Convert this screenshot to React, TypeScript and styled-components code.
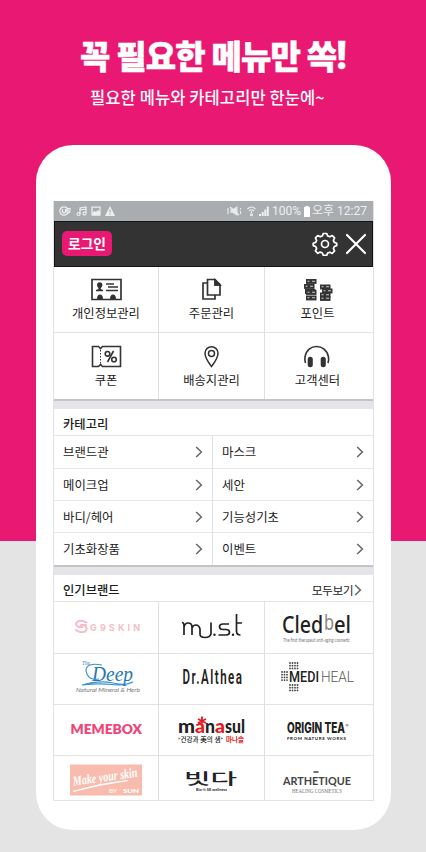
import React from 'react';
import styled, { createGlobalStyle } from 'styled-components';

const Global = createGlobalStyle`
  * { box-sizing: border-box; }
  body { margin: 0; font-family: "Noto Sans CJK KR", "Noto Sans", sans-serif; color: #1c1c1c; }
  svg { display: block; }
`;

const Page = styled.main`
  width: 426px; height: 852px; overflow: hidden;
  background: linear-gradient(#e81873 0 541px, #e4e4e4 541px);
  display: flex; flex-direction: column;
`;
const Hero = styled.header`
  height: 145px; flex: none; color: #fff; white-space: nowrap;
`;
const Headline = styled.h1`
  margin: 34px 0 0 80px; height: 42px; line-height: 42px;
  font-size: 33px; font-weight: 900; letter-spacing: -0.85px;
  -webkit-text-stroke: 0.5px #fff;
`;
const Bang = styled.span`
  font-family: Roboto, sans-serif; font-size: 38px; line-height: 30px;
`;
const Tagline = styled.p`
  margin: 9px 0 0 90px; height: 24px; line-height: 24px;
  font-size: 16.5px; font-weight: 500; letter-spacing: 0.1px;
`;
const Phone = styled.section`
  width: 355px; height: 685px; margin-left: 36px; flex: none;
  border-radius: 37px; background: #fff; padding: 56px 17px 0;
`;
const Screen = styled.div`
  width: 321px; height: 600px; border: 1px solid #e2e2e6; border-top: 0;
  display: flex; flex-direction: column; overflow: hidden;
`;
const StatusBar = styled.div`
  height: 20px; flex: none; background: #a9adb0; color: #eef0f0;
  display: flex; align-items: center; justify-content: space-between;
  padding: 0 6px 0 5px; font: 12px/20px Roboto, "Noto Sans CJK KR", sans-serif;
`;
const StatusText = styled.div`
  display: flex; align-items: center; gap: 1.5px; white-space: nowrap; letter-spacing: 0;
`;
const AppBar = styled.div`
  height: 46px; flex: none; background: #333; border: 1px solid #141414;
  display: flex; align-items: center; gap: 7px; padding: 0 5px 0 7px;
`;
const Login = styled.button`
  width: 50px; height: 25px; border: 0; border-radius: 5px; padding: 0 0 1px; margin-bottom: 1px;
  background: #e81873; color: #fff; margin-right: auto;
  font: 700 13.8px/23px "Noto Sans CJK KR", sans-serif; white-space: nowrap;
`;
const Shortcuts = styled.div`
  display: grid; grid-template-columns: 105px 106px 108px; grid-template-rows: 66px 66px; flex: none;
`;
const Shortcut = styled.div`
  border-right: 1px solid #dfe0e4; border-bottom: 1px solid #e2e2e6;
  &:nth-child(3n) { border-right: 0; padding-right: 3px; }
  &:nth-child(n+4) { border-bottom: 0; padding-top: 12px; }
  display: flex; flex-direction: column; align-items: center; padding-top: 11px;
  font-size: 12.3px; line-height: 18px; white-space: nowrap;
  svg { margin-bottom: 3px; }
`;
const Divider = styled.div`
  height: 10px; flex: none; background: #e4e4e9; border-top: 2px solid #c4c4c8;
`;
const Title = styled.h2`
  margin: 0; height: 27px; flex: none; border-bottom: 1px solid #e4e4e8;
  display: flex; justify-content: space-between; align-items: center; padding: 4px 11px 0 9px;
  font-size: 12.3px; font-weight: 500; line-height: 18px;
`;
const More = styled.span`
  display: flex; align-items: center; font-size: 11.8px; font-weight: 400; gap: 1px; letter-spacing: -0.55px;
`;
const Categories = styled.div`
  display: grid; grid-template-columns: 159px 160px; grid-template-rows: 33px 32px 32px 32px; flex: none;
`;
const Category = styled.div`
  display: flex; align-items: center; justify-content: space-between; padding: 0 9px;
  border-bottom: 1px solid #e6e6ea; border-right: 1px solid #dfe0e4;
  &:nth-child(2n) { border-right: 0; }
  &:nth-child(n+3) { padding-top: 1px; }
  &:nth-child(n+7) { border-bottom: 0; padding-top: 0; }
  font-size: 12.4px; white-space: nowrap;
`;
const Brands = styled.div`
  display: grid; grid-template-columns: 105px 106px 108px; grid-template-rows: 52px 51px 51px 45px; flex: none;
`;
const Brand = styled.div`
  border-right: 1px solid #dfe0e4; border-bottom: 1px solid #e2e2e6;
  &:nth-child(3n) { border-right: 0; }
  &:nth-child(n+10) { border-bottom: 0; }
  overflow: hidden;
`;

const Chevron = () => (
  <svg width="8" height="12" viewBox="0 0 8 12" fill="none" stroke="#666" strokeWidth="1.5"><path d="M1.2 1 6.4 6 1.2 11" /></svg>
);

const StatusLeft = () => (
  <svg width="58" height="12" viewBox="0 0 58 12" fill="none" stroke="#eef0f0" strokeWidth="1.2">
    <circle cx="5" cy="6" r="4.2" /><path d="M3.500 4v3q1.500 1.500 3 0V4M8 8.500q4-.5 3-5H8v4" />
    <path d="M21 9V3l6-1v6M21 5l6-1" /><circle cx="19.600" cy="9" r="1.500" /><circle cx="25.500" cy="8.600" r="1.500" />
    <path d="M33 2.200h8v8h-8z" /><path fill="#eef0f0" stroke="none" d="m33 9 2-3 2 1 2-2 2 2v3h-8z" />
    <path fill="#eef0f0" stroke="none" d="m51 1 5 10H46z" /><path stroke="#a9adb0" d="M51 4.500v3m0 1v1.200" />
  </svg>
);
const StatusSignals = () => (
  <svg width="44" height="12" viewBox="0 0 44 12" fill="none" stroke="#eef0f0" strokeWidth="1.1">
    <path d="M1 3v6M13.500 3v1.500m0 1.500v3M3 2l9 8" /><path fill="#eef0f0" d="M4 4.500h2L10 2v8L6 7.500H4z" opacity=".85" />
    <path d="M20.500 4q4-4 8 0M22 6q2.500-2.500 5 0M24.500 6v2" /><circle cx="24.500" cy="9.800" r="1" />
    <path fill="#eef0f0" stroke="none" d="M32 11V9h2v2zM34.700 11V7h2v4zM37.300 11V4.500h2V11zM39.800 11V1.500h2V11z" />
  </svg>
);
const Battery = () => (
  <svg width="8" height="11" viewBox="0 0 8 11" fill="#fff"><path d="M2.500 0h3v1H7v10H1V1h1.500z" /></svg>
);
const Gear = () => (
  <svg width="26" height="24" viewBox="-13 -12 26 24" fill="none" stroke="#fff" strokeWidth="1.700" strokeLinejoin="round">
    <path d="M-1.800-10.500h3.600l.8 2.400 2.200.9 2.500-1.200 2.300 2.300-1.200 2.400.9 2.100 2.400.8v2.400l-2.400.9-.9 2.200 1.200 2.300-2.500 2.400-2.300-1.200-2.200.9-.8 2.200h-3.600l-.8-2.300-2.200-.9-2.400 1.200-2.400-2.400 1.200-2.300-.9-2.100-2.500-.9V-.7l2.500-.9.900-2.100-1.200-2.400 2.400-2.300 2.400 1.200 2.200-.9z" />
    <circle r="3.500" />
  </svg>
);
const Close = () => (
  <svg width="22" height="22" viewBox="0 0 22 22" stroke="#fff" strokeWidth="2.200" strokeLinecap="round"><path d="m2 2 18 18M20 2 2 20" /></svg>
);

const IdCard = () => (
  <svg width="31" height="23" viewBox="0 0 31 23" fill="none" stroke="#333" strokeWidth="1.700">
    <path d="M1 1.500h29v20H1z" /><path d="M15 6h8M17 9h10M15 12.500h12" />
    <path fill="#333" stroke="none" d="M6 7a2.700 2.700 0 0 1 5.400 0q0 2-1.600 3v1l2.300 1v1.300H5V12l2.500-1v-1Q6 9 6 7zM6 21q0-4.500 3-4.500T12 21zM19 21q0-4.500 3-4.500T25 21z" />
  </svg>
);
const Copies = () => (
  <svg width="21" height="23" viewBox="0 0 21 23" fill="none" stroke="#333" strokeWidth="1.700">
    <path d="M6.500 1.500h7.500l5 5V17H6.500zM14 1.500V7h5M6 5H2v16h12v-3.500" /><path fill="#333" d="m14 2 5 5h-5z" />
  </svg>
);
const coinPositions = [[3, 1], [1, 6], [2, 11], [3, 12], [3, 17.500], [17, 6.500], [19, 10.500], [17, 14.500], [17, 18]];
const Coins = () => (
  <svg width="30" height="23" viewBox="0 0 30 23">
    {coinPositions.map(([x, y]) => (
      <g key={`${x}-${y}`}><rect x={x} y={y} width="10.500" height="4.900" fill="#333" /><path d={`M${x + 1.500} ${y + 2.200}h2M${x + 6} ${y + 2.200}h3`} stroke="#ccc" strokeWidth="1.100" /></g>
    ))}
  </svg>
);
const Coupon = () => (
  <svg width="31" height="23" viewBox="0 0 31 23" fill="none" stroke="#333" strokeWidth="1.600">
    <path d="M1.500 1.500h6l2 2 2-2h18v20h-18l-2-2-2 2h-6z" /><path d="M9.500 5v14" strokeDasharray="1.500 1.500" strokeWidth="1" />
    <circle cx="16.500" cy="8.800" r="2.300" /><circle cx="23" cy="14.500" r="2.300" /><path d="m22.500 6-6 11" />
  </svg>
);
const Pin = () => (
  <svg width="17" height="23" viewBox="0 0 17 23" fill="none" stroke="#333" strokeWidth="1.500">
    <path d="M8.500 21.500Q2 13 2 8.200a6.500 6.500 0 0 1 13 0q0 4.800-6.500 13.300z" /><circle cx="8.500" cy="8.500" r="3" />
  </svg>
);
const Headphones = () => (
  <svg width="29" height="23" viewBox="0 0 29 23" fill="none" stroke="#333" strokeWidth="1.600">
    <path d="M2.500 18q-1-3-.5-6C4-2 23-2 25.500 12q.500 3-.5 6" /><rect x="5.500" y="12.500" width="3.500" height="9" rx="1.700" fill="#333" /><rect x="18.500" y="12.500" width="3.500" height="9" rx="1.700" fill="#333" />
  </svg>
);

type MarkProps = {
  x: number; y: number; w: number; size: number; children: string;
  fill?: string; weight?: number; family?: string; style?: 'italic' | 'normal'; sx?: number; sy?: number; spaced?: boolean;
};
const Mark = ({ x, y, w, size, children, fill = '#222', weight = 400, family = 'Lato', style = 'normal', sx = 1, sy = 1, spaced = false }: MarkProps) => (
  <text transform={`translate(${x} ${y}) scale(${sx} ${sy})`} textLength={w / sx} lengthAdjust={spaced ? 'spacing' : 'spacingAndGlyphs'}
    fontFamily={`${family}, "Noto Sans CJK KR", sans-serif`} fontSize={size} fontWeight={weight} fontStyle={style} fill={fill}>{children}</text>
);
const Logo = ({ children }: { children: React.ReactNode }) => (
  <svg width="105" height="51" viewBox="0 0 105 51" fill="none">{children}</svg>
);

const dotBlocks = [[24, 9], [16, 18], [24, 31]];

const brands = [
  <Logo><path d="M32.500 20.500Q27 17.500 23 20q-2.500 3 1.500 5h4M32 23h-5M22 28q4 3.500 9 1.500 3.500-3 0-5.500" stroke="#f5bdc6" strokeWidth="2" strokeLinecap="round" />
    <Mark x={36} y={28.500} w={50} size={9} weight={700} fill="#f5bdc6" family="Inter" spaced>G9SKIN</Mark></Logo>,
  <Logo><path d="M23 20.500q2 0 2 3V33M25 25q1-4 4-4 4 0 4 4v8m0-7q1-3 4-3t4 4v5q0 3.500 5 3.500t6-3.500V20.500M70 22h-6q-3.500 0-3.500 2.700T64 27.500h3q3.500 0 3.500 2.700T67 33h-7.500M77.500 12v17q0 4 4 4M77.500 21h5.500" stroke="#222" strokeWidth="1.700" />
    <circle cx="55.500" cy="32.800" r="1.200" fill="#222" /><circle cx="74" cy="32.800" r="1.200" fill="#222" /></Logo>,
  <Logo><Mark x={17} y={31} w={41} size={24} family="Noto Sans" weight={500}>Cled</Mark><Mark x={59} y={27.500} w={10} size={21} fill="#8b8580" family="Noto Sans">b</Mark><Mark x={69} y={31} w={17} size={24} family="Noto Sans" weight={500}>el</Mark>
    <Mark x={18} y={40} w={67} size={5} fill="#777">The first therapeut anti-aging cosmetic</Mark></Logo>,
  <Logo><Mark x={28} y={11} w={8} size={5.500} family="Liberation Serif" style="italic" fill="#2676b5">The</Mark>
    <Mark x={38} y={26.500} w={41} size={21} family="Liberation Serif" style="italic" fill="#2676b5">Deep</Mark>
    <path d="M48 11q-16-3-16 6 2 10 13 8M28 31q18-5 31-2t20-1q-9 4-21 2.500t-30 .5" stroke="#3b93cf" strokeWidth="1.200" fill="none" />
    <Mark x={22} y={37.500} w={64} size={6.500} style="italic" fill="#777">Natural Mineral &amp; Herb</Mark></Logo>,
  <Logo><Mark x={23.500} y={30} w={59.500} size={16.500} family="Roboto" weight={600} sx={0.7} sy={1.180} spaced>Dr.Althea</Mark></Logo>,
  <Logo>{dotBlocks.flatMap(([x, y]) => [0, 1, 2, 3].flatMap(a => [0, 1, 2].map(b => <circle key={`${x}-${y}-${a}-${b}`} cx={x + (x === 16 ? b : a) * 2.500 + 1} cy={y + (x === 16 ? a : b) * 2.700} r=".9" fill="#444" />)))}
    <Mark x={24} y={28} w={30} size={14.500} weight={500} family="Roboto">MEDI</Mark><Mark x={56} y={28} w={33} size={14.500} fill="#555" weight={300} family="Roboto">HEAL</Mark></Logo>,
  <Logo><Mark x={16.500} y={29} w={71.500} size={13} weight={800} fill="#ed4779">MEMEBOX</Mark></Logo>,
  <Logo><Mark x={19} y={28} w={17} size={18} weight={900}>m</Mark><Mark x={36} y={28} w={10} size={18} weight={900} fill="#e61922">a</Mark><Mark x={46} y={28} w={10} size={18} weight={900}>n</Mark><Mark x={56} y={28} w={10} size={18} weight={900} fill="#e61922">a</Mark><Mark x={66} y={28} w={20} size={18} weight={900}>sul</Mark>
    <path d="M43 11.500v7M39 14l8 4M47 14l-8 4" stroke="#e61922" strokeWidth="1.800" /><Mark x={19} y={37} w={45} size={6.500} weight={500}>“건강과 美의 샘”</Mark><Mark x={67} y={37} w={18} size={6.500} weight={700} fill="#e61922">마나슬</Mark></Logo>,
  <Logo><Mark x={22} y={27.500} w={58} size={14} weight={800} family="Inter">ORIGIN TEA</Mark><Mark x={80.500} y={22} w={3} size={4} family="Inter">®</Mark><Mark x={22} y={35} w={59} size={4.500} weight={700} spaced>FROM NATURE WORKS</Mark></Logo>,
  <Logo><rect x="16" y="8.500" width="72" height="31" fill="#f8bcae" /><g transform="rotate(-8 50 24)"><Mark x={19} y={25.500} w={65} size={13} sy={1.050} family="Liberation Serif" style="italic" weight={600} fill="#fff">Make your skin</Mark></g>
    <path d="M19 35.500q26-8 55-11-28 4-55 11" stroke="#fff" /><Mark x={55} y={37} w={8} size={6} fill="#fff">BY</Mark><Mark x={69} y={37} w={16} size={6} weight={900} fill="#fff">SUN</Mark></Logo>,
  <Logo><Mark x={25} y={27.500} w={53} size={17} weight={500} sy={0.9} family="'Noto Sans CJK KR'">빗다</Mark>
    <Mark x={37} y={35} w={31} size={4.500} weight={700}>Bio-it SE wellness</Mark></Logo>,
  <Logo><Mark x={18} y={28.500} w={68} size={12} weight={700} fill="#444">ARTHETIQUE</Mark><path d="M48.500 16h5" stroke="#444" strokeWidth="1.500" /><Mark x={27} y={37} w={50} size={6} family="Liberation Serif" fill="#777">HEALING COSMETICS</Mark></Logo>,
];

const shortcuts = [
  { label: '개인정보관리', icon: <IdCard /> }, { label: '주문관리', icon: <Copies /> }, { label: '포인트', icon: <Coins /> },
  { label: '쿠폰', icon: <Coupon /> }, { label: '배송지관리', icon: <Pin /> }, { label: '고객센터', icon: <Headphones /> },
];
const categories = ['브랜드관', '마스크', '메이크업', '세안', '바디/헤어', '기능성기초', '기초화장품', '이벤트'];

export default function App() {
  return (
    <Page>
      <Global />
      <Hero><Headline>꼭 필요한 메뉴만 쏙<Bang>!</Bang></Headline><Tagline>필요한 메뉴와 카테고리만 한눈에~</Tagline></Hero>
      <Phone>
        <Screen>
          <StatusBar><StatusLeft /><StatusText><StatusSignals />100%<Battery />오후 12:27</StatusText></StatusBar>
          <AppBar><Login>로그인</Login><Gear /><Close /></AppBar>
          <Shortcuts>{shortcuts.map(s => <Shortcut key={s.label}>{s.icon}{s.label}</Shortcut>)}</Shortcuts>
          <Divider />
          <Title>카테고리</Title>
          <Categories>{categories.map(c => <Category key={c}>{c}<Chevron /></Category>)}</Categories>
          <Divider />
          <Title>인기브랜드<More>모두보기<Chevron /></More></Title>
          <Brands>{brands.map((logo, i) => <Brand key={i}>{logo}</Brand>)}</Brands>
        </Screen>
      </Phone>
    </Page>
  );
}
